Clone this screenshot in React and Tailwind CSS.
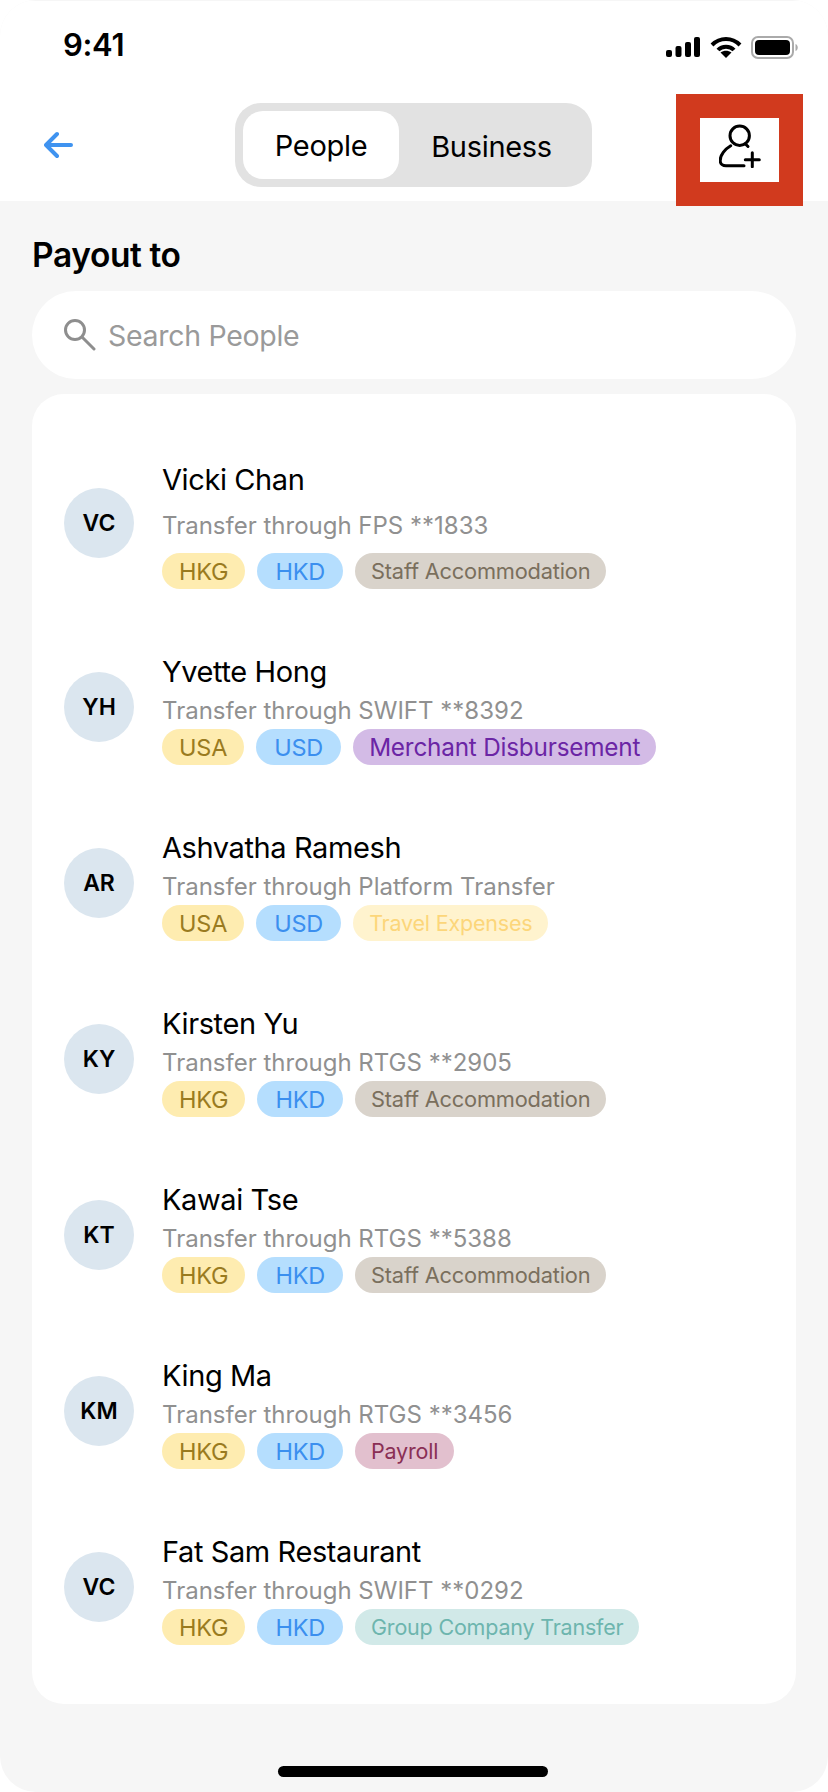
const font = { fontFamily: 'Inter, "Liberation Sans", sans-serif' };

const tagStyles = {
  region: 'bg-[#feecb0] text-[#9a7b1f] text-[23.5px] px-[17px]',
  currency: 'bg-[#b5defe] text-[#3b8fef] text-[23.5px] px-[18px]',
  staff: 'bg-[#d9d3cb] text-[#7a6f5d] text-[21.8px] px-[16px]',
  merchant: 'bg-[#d3bbe6] text-[#6b25a5] text-[24.3px] px-[16px]',
  travel: 'bg-[#fff3ce] text-[#fcd67a] text-[21.5px] px-[16px]',
  payroll: 'bg-[#e2c0ce] text-[#8a2f55] text-[21.5px] px-[16px]',
  group: 'bg-[#d1e9e8] text-[#6db5ae] text-[21.5px] px-[16px]',
};

const people = [
  { initials: 'VC', name: 'Vicki Chan', sub: 'Transfer through FPS **1833', region: 'HKG', currency: 'HKD', tag: 'Staff Accommodation', type: 'staff', first: true },
  { initials: 'YH', name: 'Yvette Hong', sub: 'Transfer through SWIFT **8392', region: 'USA', currency: 'USD', tag: 'Merchant Disbursement', type: 'merchant' },
  { initials: 'AR', name: 'Ashvatha Ramesh', sub: 'Transfer through Platform Transfer', region: 'USA', currency: 'USD', tag: 'Travel Expenses', type: 'travel' },
  { initials: 'KY', name: 'Kirsten Yu', sub: 'Transfer through RTGS **2905', region: 'HKG', currency: 'HKD', tag: 'Staff Accommodation', type: 'staff' },
  { initials: 'KT', name: 'Kawai Tse', sub: 'Transfer through RTGS **5388', region: 'HKG', currency: 'HKD', tag: 'Staff Accommodation', type: 'staff' },
  { initials: 'KM', name: 'King Ma', sub: 'Transfer through RTGS **3456', region: 'HKG', currency: 'HKD', tag: 'Payroll', type: 'payroll' },
  { initials: 'VC', name: 'Fat Sam Restaurant', sub: 'Transfer through SWIFT **0292', region: 'HKG', currency: 'HKD', tag: 'Group Company Transfer', type: 'group' },
];

function StatusIcons() {
  return (
    <div className="mt-1 flex items-center">
      <svg width="34" height="20" viewBox="0 0 34 20" fill="#000">
        <rect x="0" y="13" width="6" height="7" rx="2" />
        <rect x="9.500" y="9" width="6" height="11" rx="2" />
        <rect x="19" y="5" width="6" height="15" rx="2" />
        <rect x="28" y="0" width="6" height="20" rx="2" />
      </svg>
      <svg className="ml-[10px]" width="32" height="22" viewBox="0 0 32 22" fill="none" stroke="#000" strokeWidth="4">
        <path d="M2 9 C10 1 22 1 30 9" />
        <path d="M8 14 C12 9.500 20 9.500 24 14" />
        <path d="M16 22 L10.500 16.500 C14 14 18 14 21.500 16.500 Z" fill="#000" stroke="none" />
      </svg>
      <svg className="ml-[9px]" width="48" height="23" viewBox="0 0 48 23" fill="none">
        <rect x="1" y="1" width="41" height="21" rx="6" stroke="#aaa" strokeWidth="2" />
        <rect x="4" y="4" width="35" height="15" rx="4" fill="#000" />
        <path d="M44.500 8 C47.500 9 47.500 14 44.500 15 Z" fill="#aaa" />
      </svg>
    </div>
  );
}

function Tag({ type, children }) {
  return (
    <span className={`flex h-9 items-center rounded-[18px] pt-px tracking-[-0.2px] ${tagStyles[type]}`}>
      {children}
    </span>
  );
}

function PersonRow({ person }) {
  return (
    <div className="flex items-center gap-[28px] pl-8">
      <div className="mb-1 flex h-[70px] w-[70px] shrink-0 items-center justify-center rounded-full bg-[#dbe6ef] pt-px text-[23px] font-semibold text-black">
        {person.initials}
      </div>
      <div className="flex flex-col">
        <div className={`pt-px text-[29px] leading-[36px] tracking-[-0.4px] text-black ${person.first ? 'mb-[14px]' : 'mb-[7px]'}`}>{person.name}</div>
        <div className={`text-[24px] leading-[28px] text-[#909090] ${person.first ? 'mb-[13px]' : 'mb-1'}`}>{person.sub}</div>
        <div className="flex gap-3">
          <Tag type="region">{person.region}</Tag>
          <Tag type="currency">{person.currency}</Tag>
          <Tag type={person.type}>{person.tag}</Tag>
        </div>
      </div>
    </div>
  );
}

export default function App() {
  return (
    <div style={font} className="relative flex h-[1792px] w-[828px] flex-col overflow-hidden rounded-[36px] bg-[#f6f6f6]">
      {/* top white area: status bar + nav */}
      <div className="mt-px h-[200px] shrink-0 bg-white">
        <div className="flex h-[93px] items-center justify-between pl-[63px] pr-[29px] pb-[5px]">
          <span className="text-[31px] font-semibold tracking-[-0.3px] text-black">9:41</span>
          <StatusIcons />
        </div>
        <div className="flex h-[112px] items-center pl-[44px] pr-[25px]">
          <div className="mb-[10px] w-[191px]">
            <svg width="30" height="28" viewBox="0 0 30 28" fill="none" stroke="#3f93f0" strokeWidth="4" strokeLinecap="round" strokeLinejoin="round">
              <path d="M27 14 H3 M13 3 L2 14 L13 25" />
            </svg>
          </div>
          <div className="mb-[10px] flex h-[84px] w-[357px] items-center rounded-[26px] bg-[#e2e2e2] pl-2">
            <div className="flex h-[68px] w-[156px] items-center justify-center rounded-[20px] bg-white pt-[2px] text-[29px] tracking-[-0.3px] text-black">People</div>
            <div className="flex-1 pt-[3px] pr-[8px] text-center text-[29px] tracking-[-0.3px] text-black">Business</div>
          </div>
          <div className="ml-auto flex h-[112px] w-[127px] items-center justify-center bg-[#d13a1e]">
            <div className="flex h-[64px] w-[79px] items-center justify-center bg-white">
              <svg className="mb-[9px]" width="42" height="44" viewBox="0 0 42 44" fill="none" stroke="#000" strokeWidth="3" strokeLinecap="round" strokeLinejoin="round">
                <circle cx="20.700" cy="11.700" r="9.700" />
                <path d="M11.700 21.700 C6 25 1 31 1.200 37 C1.400 40 4 41.700 7 41.700 H25" />
                <path d="M26.500 20 L29 22.500" />
                <path d="M33.300 28.700 V42.700 M26.300 35.700 H40.300" />
              </svg>
            </div>
          </div>
        </div>
      </div>

      <div className="flex flex-1 flex-col px-8">
        <h1 className="mt-[34px] text-[33.5px] leading-[40px] font-semibold tracking-[-0.4px] text-black">Payout to</h1>
        <div className="mt-[16px] flex h-[88px] items-center gap-3 rounded-[44px] bg-white pl-[32px]">
          <svg width="32" height="32" viewBox="0 0 32 32" fill="none" stroke="#8e8e8e" strokeWidth="3" strokeLinecap="round">
            <circle cx="11" cy="11" r="9.500" />
            <path d="M18 18 L30 30" />
          </svg>
          <span className="pt-[2px] text-[28.5px] tracking-[-0.3px] text-[#9a9a9a]">Search People</span>
        </div>
        <div className="mt-[15px] flex h-[1310px] flex-col gap-16 rounded-[32px] bg-white pt-[67px]">
          {people.map((p) => (
            <PersonRow key={p.name} person={p} />
          ))}
        </div>
      </div>

      <div className="absolute left-[278px] top-[1766px] h-[11px] w-[270px] rounded-full bg-black" />
    </div>
  );
}
